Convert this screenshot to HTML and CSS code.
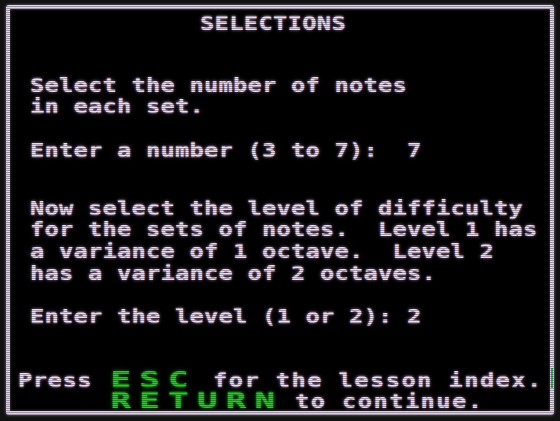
FILE: index.html
```html
<!DOCTYPE html>
<html>
<head>
<meta charset="utf-8">
<link rel="stylesheet" href="styles.css">
</head>
<body>
<div class="screen">
  <div class="title">SELECTIONS</div>
  <div class="para p1">Select the number of notes
in each set.</div>
  <div class="para p2">Enter a number (3 to 7):  7</div>
  <div class="para p3">Now select the level of difficulty
for the sets of notes.  Level 1 has
a variance of 1 octave.  Level 2
has a variance of 2 octaves.</div>
  <div class="para p4">Enter the level (1 or 2): 2</div>
  <div class="footer">
    <div class="fline"><span class="press">Press</span><span class="key k1">ESC</span><span class="ftxt t1">for the lesson index.</span></div>
    <div class="fline"><span class="key k2">RETURN</span><span class="ftxt t2">to continue.</span></div>
  </div>
  <span class="glitch"></span>
</div>
</body>
</html>
```

FILE: styles.css
```css
html, body {
  margin: 0;
  padding: 0;
  background: #000;
  overflow: hidden;
}
body {
  width: 560px;
  height: 421px;
  background: #111;
}
.screen {
  position: relative;
  box-sizing: border-box;
  margin: 5px 0 0 6px;
  width: 548px;
  height: 410px;
  border: 4px solid #e2d2ea;
  border-radius: 3px;
  background: #000;
  padding: 3.6px 0 0 8px;
  box-shadow: 0 0 3px rgba(220, 190, 235, 0.6), inset 0 0 3px rgba(220, 190, 235, 0.5);
  font-family: "DejaVu Sans Mono", "Liberation Mono", monospace;
  font-weight: bold;
  font-size: 19px;
  line-height: 21.7px;
  color: #eddcf0;
  text-shadow: 0 0 2px rgba(225, 170, 235, 0.85), 0 0 5px rgba(200, 140, 220, 0.35);
}
.screen::after {
  content: "";
  position: absolute;
  top: -4px;
  left: -4px;
  right: -4px;
  bottom: -4px;
  background: repeating-linear-gradient(to bottom, rgba(0,0,0,0) 0, rgba(0,0,0,0) 1px, rgba(0,0,0,0.3) 1px, rgba(0,0,0,0.3) 2px);
  pointer-events: none;
}
.title, .para, .fline {
  width: fit-content;
  white-space: pre;
  transform: scaleX(1.25);
  transform-origin: 0 0;
}
.title {
  margin-left: 182px;
  letter-spacing: 0.24px;
}
.para {
  margin-left: 12px;
  letter-spacing: 0.16px;
}
.p1 { margin-top: 40.3px; }
.p2 { margin-top: 21.6px; }
.p3 { margin-top: 36.3px; }
.p4 { margin-top: 21.2px; }
.footer {
  margin-top: 42.3px;
}
.fline {
  display: flex;
  align-items: baseline;
  height: 21.7px;
}
.press {
  letter-spacing: 0.4px;
}
.key {
  display: inline-block;
  color: #22cf22;
  text-shadow: 0 0 2px rgba(40, 210, 40, 0.8), 0 0 5px rgba(30, 180, 30, 0.35);
  font-size: 21px;
  letter-spacing: 5.08px;
  transform: scaleX(1.3);
  transform-origin: 0 0;
}
.k1 { margin-left: 15.2px; }
.k2 { margin-left: 74.4px; }
.ftxt {
  letter-spacing: 1.12px;
}
.t1 { margin-left: 28.44px; }
.t2 { margin-left: 40.88px; }
.glitch {
  position: absolute;
  right: -3px;
  top: 359px;
  width: 2px;
  height: 20px;
  background: #2fbf6a;
}
```
